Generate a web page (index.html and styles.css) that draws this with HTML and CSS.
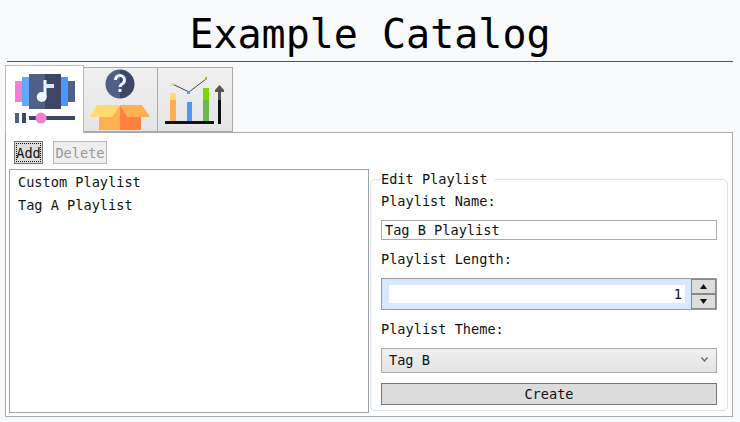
FILE: index.html
```html
<!DOCTYPE html>
<html lang="en">
<head>
    <meta charset="UTF-8">
    <meta name="viewport" content="width=device-width, initial-scale=1.0">
    <title>Example Catalog</title>
    <link rel="stylesheet" href="styles.css">
</head>
<body>
    <h1 id="title">Example Catalog</h1>

    <div id="tabs">
        <div class="tab active">
            <svg width="64" height="64" viewBox="13 68 64 64">
                <rect x="15" y="81" width="7" height="21" fill="#f57fd0"/>
                <rect x="22" y="77" width="7" height="29" fill="#62a8ff"/>
                <rect x="61" y="77" width="7" height="29" fill="#4a97ff"/>
                <rect x="68" y="81" width="7" height="21" fill="#4f5f85"/>
                <rect x="29" y="74" width="16" height="35" fill="#4f5f85"/>
                <rect x="45" y="74" width="16" height="35" fill="#3e4668"/>
                <circle cx="41.700" cy="97" r="5" fill="#f0f6ff"/>
                <rect x="43.500" y="80" width="3" height="17" fill="#f0f6ff"/>
                <rect x="45" y="84" width="9" height="4" fill="#dbe8fb"/>
                <rect x="15" y="113" width="4" height="10" fill="#4f5f85"/>
                <rect x="22" y="113" width="4" height="10" fill="#3e4668"/>
                <rect x="29" y="116" width="46" height="4" fill="#3e4668"/>
                <circle cx="41" cy="118" r="5.5" fill="#f57fd0"/>
            </svg>
        </div>
        <div class="tab">
            <svg width="64" height="64" viewBox="89 68 64 64">
                <path d="M120 69.500a14.500 14.500 0 0 0 0 29z" fill="#4f5f85"/>
                <path d="M120 69.500a14.500 14.500 0 0 1 0 29z" fill="#3e4668"/>
                <path d="M115.500 80a4.500 4.500 0 1 1 7 3.700c-1.300.9-2.500 1.500-2.500 3.300" fill="none" stroke="#eef4ff" stroke-width="3"/>
                <rect x="118.500" y="89" width="3" height="3" fill="#eef4ff"/>
                <path d="M99 117h13l8-12v25h-21z" fill="#ffb050"/>
                <path d="M120 105l8 12h13v13h-21z" fill="#ff8040"/>
                <path d="M90 117l7-12h23l-8 12z" fill="#ffdc70"/>
                <path d="M120 105h22l8 12h-22z" fill="#ffb050"/>
            </svg>
        </div>
        <div class="tab">
            <svg width="64" height="64" viewBox="163 68 64 64">
                <rect x="170" y="93" width="6" height="7" fill="#ffdc70"/>
                <rect x="170" y="100" width="6" height="21" fill="#ffb050"/>
                <rect x="187" y="102" width="5" height="19" fill="#4a97ff"/>
                <rect x="203" y="88" width="6" height="12" fill="#7ad800"/>
                <rect x="203" y="100" width="6" height="21" fill="#6ab850"/>
                <rect x="165" y="121" width="49" height="3" fill="#111"/>
                <path d="M172.500 84l16.500 8 17-13" fill="none" stroke="#444" stroke-width="1"/>
                <rect x="171" y="83" width="3" height="3" fill="#ffdc70"/>
                <rect x="187" y="91" width="3" height="3" fill="#4a97ff"/>
                <rect x="205" y="77" width="2" height="3" fill="#7ad800"/>
                <rect x="218" y="100" width="3" height="24" fill="#111"/>
                <path d="M218 100v-8h-3v-2l4.500-5 4.500 5v2h-3v8z" fill="#555"/>
            </svg>
        </div>
    </div>

    <div id="panel">
        <div id="leftcol">
            <div id="toolbar">
                <button class="toolbtn focused" id="add">Add</button>
                <button class="toolbtn" id="delete" disabled>Delete</button>
            </div>
            <div id="list">
                <div class="item">Custom Playlist</div>
                <div class="item">Tag A Playlist</div>
            </div>
        </div>

        <fieldset id="edit">
            <legend>Edit Playlist</legend>
            <div class="label first">Playlist Name:</div>
            <div id="name">Tag B Playlist</div>
            <div class="label">Playlist Length:</div>
            <div id="length">
                <div id="lengthvalue"><span>1</span></div>
                <div id="spin">
                    <div class="spinbtn"><svg width="7" height="5" viewBox="0 0 7 5"><path d="M3.500 0L7 5H0z" fill="#111"/></svg></div>
                    <div class="spinbtn"><svg width="7" height="5" viewBox="0 0 7 5"><path d="M0 0h7L3.500 5z" fill="#111"/></svg></div>
                </div>
            </div>
            <div class="label">Playlist Theme:</div>
            <div id="theme">
                <span>Tag B</span>
                <svg width="7" height="5" viewBox="0 0 7 5"><path d="M.5 .5L3.500 4 6.500 .5" fill="none" stroke="#666" stroke-width="1.300"/></svg>
            </div>
            <div id="create">Create</div>
        </fieldset>
    </div>
</body>
</html>
```

FILE: styles.css
```css
html, body
{
    margin: 0;
    height: 422px;
    overflow: hidden;
}
body
{
    background-color: #f8f9fb;
    font-family: "DejaVu Sans Mono", "Liberation Mono", monospace;
    font-size: 13.6px;
    color: #111;
    display: flex;
    flex-direction: column;
    padding: 0 7px 5px 5px;
    box-sizing: border-box;
}

#title
{
    margin: 0 0 2px 2px;
    height: 62px;
    box-sizing: border-box;
    padding-top: 9px;
    border-bottom: 1px solid #555;
    font-size: 40px;
    font-weight: normal;
    line-height: 50px;
    text-align: center;
    color: #000;
}

#tabs
{
    display: flex;
    align-items: flex-end;
    height: 68px;
    flex: none;
}
.tab
{
    box-sizing: border-box;
    width: 74px;
    height: 65px;
    padding: 0 4px 0 5px;
    border: 1px solid #aaa;
    border-left-width: 0;
    background: linear-gradient(#f0f0f0, #e5e5e5);
}
.tab svg
{
    display: block;
}
.tab.active
{
    width: 79px;
    height: 68px;
    padding: 2px 7px 0;
    border-width: 1px 1px 0 1px;
    border-color: #bbb;
    background: #fff;
    position: relative;
    z-index: 1;
    margin-bottom: -1px;
}
.tab:last-child
{
    width: 75px;
}

#panel
{
    flex: 1;
    min-height: 0;
    display: flex;
    gap: 1px;
    box-sizing: border-box;
    padding: 8px 4px 3px 3px;
    background-color: #fff;
    border: 1px solid #aaa;
}

#leftcol
{
    width: 360px;
    display: flex;
    flex-direction: column;
    flex: none;
}
#toolbar
{
    display: flex;
    gap: 10px;
    padding-left: 5px;
    margin-bottom: 5px;
}
.toolbtn
{
    height: 23px;
    padding: 0;
    font-family: inherit;
    font-size: 13.6px;
    color: #111;
    background-color: #ddd;
    border: 1px solid #777;
    outline: 1px dotted #111;
    outline-offset: -3px;
}
#add
{
    width: 29px;
}
#delete
{
    width: 54px;
}
.toolbtn:disabled
{
    color: #999;
    background-color: #eee;
    border-color: #bbb;
    outline: none;
}
#list
{
    flex: 1;
    box-sizing: border-box;
    padding: 1px 8px;
    border: 1px solid #a0a0a0;
}
.item
{
    height: 23px;
    line-height: 23px;
}

#edit
{
    flex: 1;
    min-width: 0;
    box-sizing: border-box;
    margin: 0 0 2px 0;
    padding: 0 10px 6px 10px;
    border: 1px solid #d8e2ea;
    border-radius: 5px;
    align-self: flex-end;
    height: 240px;
    display: flex;
    flex-direction: column;
}
#edit legend
{
    padding: 0 8px 0 0;
    line-height: 16px;
}

.label
{
    flex: none;
    height: 17px;
    line-height: 17px;
    margin: 11px 0 10px 0;
}
.label.first
{
    margin-top: 6px;
}
#name
{
    flex: none;
    box-sizing: border-box;
    height: 20px;
    line-height: 18px;
    padding-left: 3px;
    border: 1px solid #aaa;
}
#length
{
    flex: none;
    box-sizing: border-box;
    height: 32px;
    display: flex;
    border: 1px solid #999;
    background-color: #d8e8ff;
}
#lengthvalue
{
    flex: 1;
    margin: 6px 6px 6px 7px;
    padding-right: 3px;
    background-color: #fff;
    text-align: right;
    line-height: 18px;
}
#spin
{
    width: 25px;
    display: flex;
    flex-direction: column;
}
.spinbtn
{
    flex: 1;
    box-sizing: border-box;
    display: flex;
    align-items: center;
    justify-content: center;
    background-color: #ddd;
    border: 1px solid #888;
}
#theme
{
    flex: none;
    box-sizing: border-box;
    height: 25px;
    display: flex;
    align-items: center;
    justify-content: space-between;
    padding: 0 8px 2px 7px;
    border: 1px solid #aaa;
    background: linear-gradient(#f0f0f0, #e4e4e4);
}
#create
{
    flex: none;
    box-sizing: border-box;
    height: 22px;
    margin-top: 10px;
    line-height: 20px;
    text-align: center;
    border: 1px solid #777;
    background-color: #dcdcdc;
}
```
